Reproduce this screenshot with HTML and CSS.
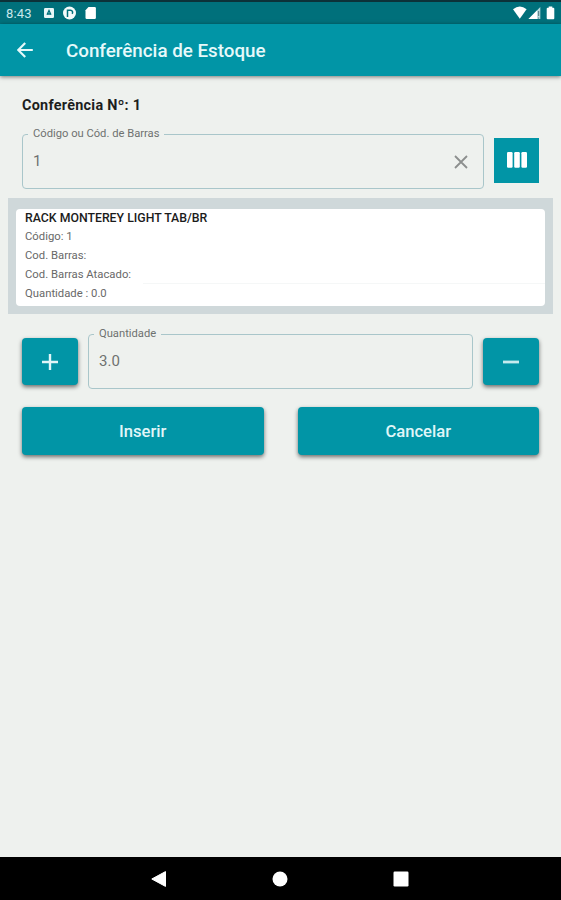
FILE: index.html
```
<!DOCTYPE html>
<html lang="pt-BR">
<head>
<meta charset="utf-8">
<title>Conferência de Estoque</title>
<link rel="stylesheet" href="styles.css">
</head>
<body>
<div class="screen">
  <header class="status">
    <span class="clock">8:43</span>
    <svg class="status-left" width="54" height="14" viewBox="0 0 54 14">
      <rect x="0" y="2" width="10" height="10" rx="1.2" fill="#e8f6f7"/>
      <path d="M3 8.800 5 4.500l2 4.300M3.500 8h3" fill="none" stroke="#00707b" stroke-width="1.300"/>
      <circle cx="25.500" cy="7" r="6.500" fill="#f4fbfb"/>
      <path d="M23.500 11V4.200h3a2.100 2.100 0 0 1 1.500 3.600" fill="none" stroke="#00707b" stroke-width="1.500"/>
      <path d="M44.500 1h6.200q1.200 0 1.200 1.200v9.600q0 1.200-1.200 1.200h-8q-1.200 0-1.200-1.200V4.300z" fill="#fff"/>
    </svg>
    <svg class="status-right" width="42" height="14" viewBox="0 0 42 14">
      <path d="M0 3.200Q6.800-2 13.600 3.200L6.800 12.800z" fill="#fff"/>
      <path d="M15.500 13 27.300 1v12z" fill="#b6dade"/>
      <path d="M15.500 13 24 4.500V13z" fill="#fff"/>
      <path d="M25.700 5v5M25.700 11.500v1.200" stroke="#50717b" stroke-width="1"/>
      <path d="M35.700.5h3.600v1.200h1q1 0 1 1v9.500q0 1-1 1h-5.600q-1 0-1-1V2.700q0-1 1-1h1z" fill="#fff"/>
    </svg>
  </header>
  <div class="appbar">
    <svg class="back" width="16" height="16" viewBox="0 0 16 16"><path d="M15.800 8H1.500M8.200 1 1.200 8l7 7" fill="none" stroke="#e6f9fa" stroke-width="2.200"/></svg>
    <h1>Conferência de Estoque</h1>
  </div>
  <main>
    <h2><span>Conferência Nº: 1</span></h2>
    <div class="code-row">
      <fieldset class="field">
        <legend><span class="code-label">Código ou Cód. de Barras</span></legend>
        <span class="value">1</span>
        <svg class="clear" width="14" height="14" viewBox="0 0 14 14"><path d="m1 1 12 12M13 1 1 13" stroke="#8c8f8e" stroke-width="1.800"/></svg>
      </fieldset>
      <div class="scan">
        <svg width="20" height="16" viewBox="0 0 20 16" fill="#fff"><rect width="5.600" height="15.800" rx="1.200"/><rect x="7.200" width="5.600" height="15.800" rx="1.200"/><rect x="14.400" width="5.600" height="15.800" rx="1.200"/></svg>
      </div>
    </div>
    <section class="panel">
      <div class="card">
        <strong>RACK MONTEREY LIGHT TAB/BR</strong>
        <span>Código: 1</span>
        <span>Cod. Barras:</span>
        <span class="wholesale">Cod. Barras Atacado:</span>
        <span>Quantidade : 0.0</span>
      </div>
    </section>
    <div class="qty-row">
      <div class="btn step"><svg width="16" height="16" viewBox="0 0 16 16"><path d="M0 8h16M8 0v16" stroke="#e0f6f8" stroke-width="2.400"/></svg></div>
      <fieldset class="field">
        <legend><span class="qty-label">Quantidade</span></legend>
        <span class="value">3.0</span>
      </fieldset>
      <div class="btn step"><svg width="16" height="16" viewBox="0 0 16 16"><path d="M0 8h16" stroke="#c5eaee" stroke-width="2.800"/></svg></div>
    </div>
    <div class="actions">
      <div class="btn">Inserir</div>
      <div class="btn">Cancelar</div>
    </div>
  </main>
  <nav>
    <svg width="16" height="16" viewBox="0 0 16 16"><path d="M.8 8 14.500.6v14.800z" fill="#fff" stroke="#fff" stroke-linejoin="round"/></svg>
    <svg width="16" height="16" viewBox="0 0 16 16"><circle cx="8" cy="8" r="7.500" fill="#fff"/></svg>
    <svg width="16" height="16" viewBox="0 0 16 16"><rect x=".5" y=".5" width="15" height="15" rx="1.200" fill="#fff"/></svg>
  </nav>
</div>
</body>
</html>
```
FILE: styles.css
```
* { box-sizing: border-box; }
body { margin: 0; background: #eef1ee; font-family: Roboto, "Liberation Sans", sans-serif; }
svg { display: block; flex: none; }
.screen { width: 561px; height: 900px; display: flex; flex-direction: column; overflow: hidden; }

.status { height: 24px; flex: none; background: #00707b; border-top: 2px solid #0c3138; display: flex; align-items: center; padding: 0 6px; }
.clock { width: 38px; font-size: 13px; color: #c9e8eb; letter-spacing: .2px; }
.status-right { margin-left: auto; }

.appbar { height: 52px; flex: none; background: #0195a6; display: flex; align-items: center; padding-left: 17px; box-shadow: 0 1px 4px rgba(0, 0, 0, .5); }
.appbar h1 { margin: 2px 0 0 33px; font-size: 18.800px; font-weight: 500; color: #e6f9fa; white-space: nowrap; }

main { flex: 1; padding-top: 21px; display: flex; flex-direction: column; }
h2 { margin: 0 22px; height: 18px; line-height: 18px; font-size: 14.400px; font-weight: 700; letter-spacing: .28px; color: #1c1e1d; }

.code-row, .qty-row { display: flex; align-items: center; margin: 0 22px; gap: 10px; }
.code-row { margin-top: 12px; }
.field { flex: 1; min-width: 0; height: 62px; margin: 0; padding: 0 15px 0 10px; border: 1.500px solid #a9c6ca; border-radius: 4px; display: flex; align-items: center; }
.field legend { height: 14px; margin-left: -5px; padding: 0 5px; font-size: 11.200px; line-height: 14px; color: #6e7170; white-space: nowrap; }
.value { flex: 1; font-size: 15px; line-height: 20px; color: #6e7170; margin-top: -7px; }
.clear { margin-top: -6px; }
.scan { width: 45px; height: 45px; margin-top: 4px; background: #0195a6; display: flex; align-items: center; justify-content: center; }

.panel { height: 116px; flex: none; margin: 9px 8px 0; padding: 11px 8px 8px; background: #cfd8da; }
.card { height: 97px; background: #fff; border-radius: 4px; padding: 0 0 0 9px; display: flex; flex-direction: column; }
.card > * { height: 19px; line-height: 19px; font-size: 11.300px; color: #686868; white-space: nowrap; }
.card > strong { font-weight: 500; color: #1b1b1b; font-size: 12.300px; height: 18px; }
.wholesale { display: flex; gap: 12px; }
.wholesale::after { content: ""; flex: 1; border-bottom: 1px solid #f5f7f7; }

.qty-row { margin-top: 13px; }
.btn { background: #0195a6; border-radius: 4px; color: #e0f6f8; display: flex; align-items: center; justify-content: center; font-size: 16.600px; font-weight: 500; box-shadow: 0 2px 4px rgba(0, 0, 0, .55); }
.step { width: 56px; height: 47px; margin-top: 7px; }

.actions { display: flex; gap: 34px; margin: 18px 22px 0; }
.actions .btn { flex: 1; height: 48px; }

nav { height: 43px; flex: none; background: #000; display: flex; justify-content: center; align-items: center; gap: 105px; padding-right: 1px; }
```
